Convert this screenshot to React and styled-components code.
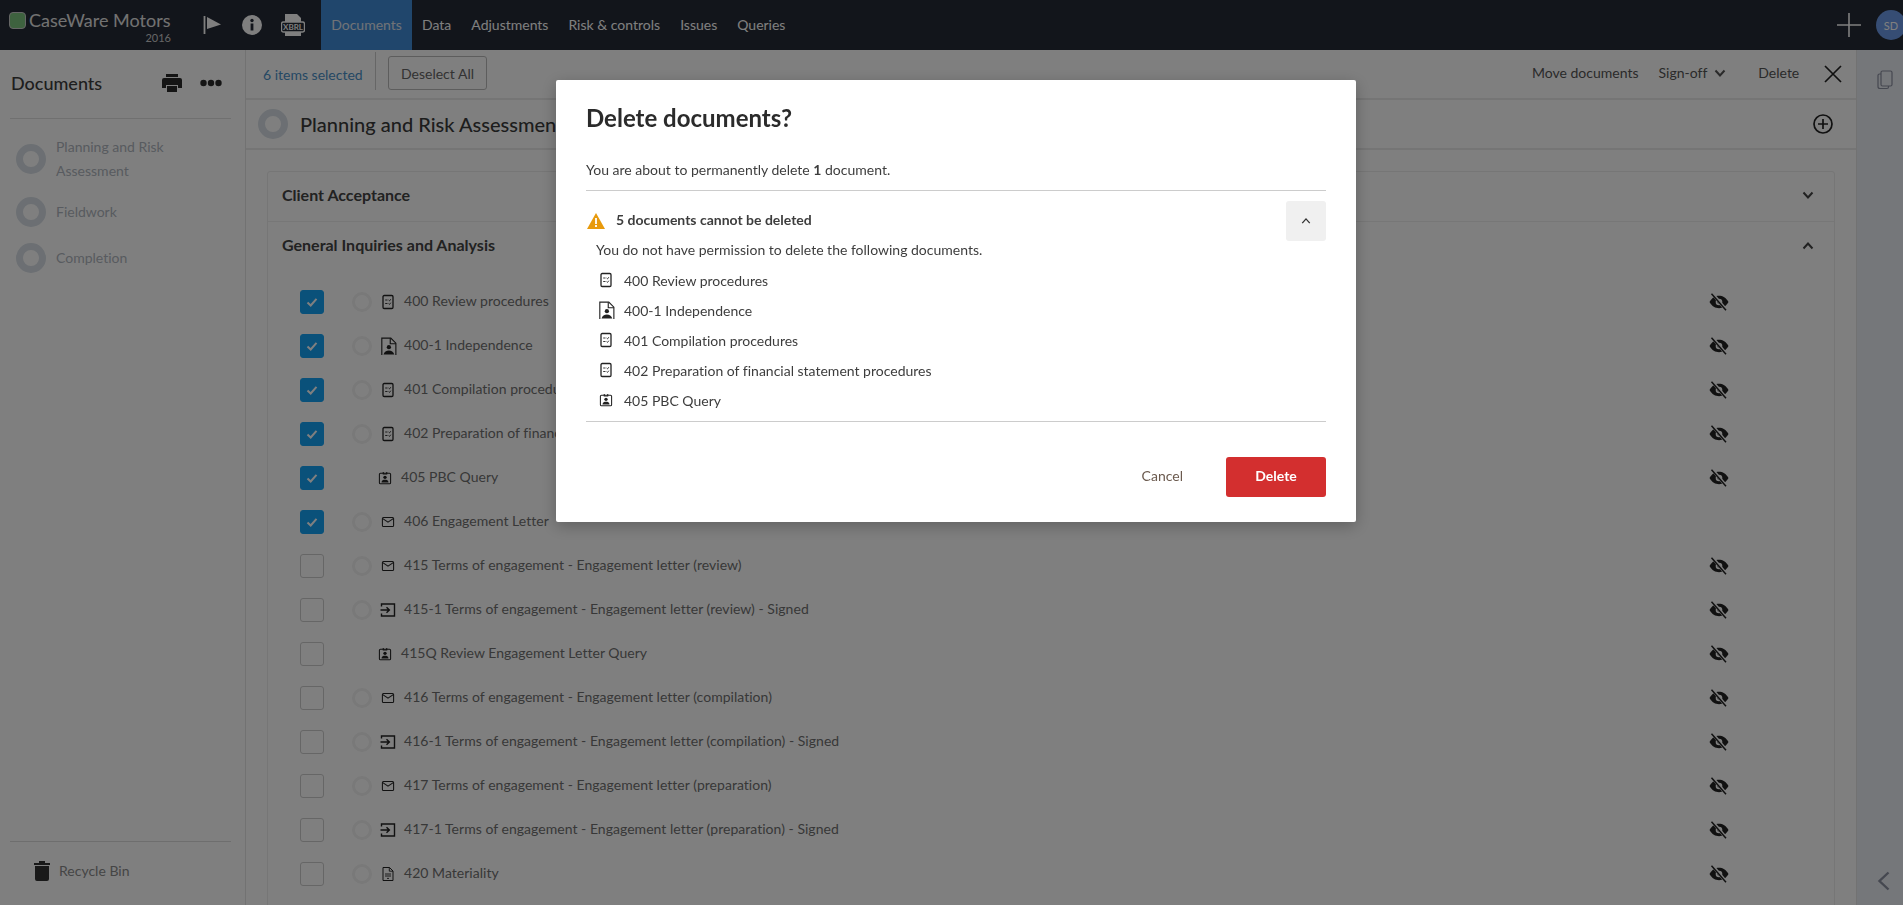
import React from 'react'
import styled, { createGlobalStyle } from 'styled-components'

const GlobalStyle = createGlobalStyle`
    html, body { margin: 0; padding: 0; height: 100%; overflow: hidden; }
    body { font-family: Lato, "Open Sans", sans-serif; font-size: 14px; color: #666; background: #fff; font-variant-ligatures: none; }
    * { box-sizing: border-box; }
`

const Page = styled.div`
    height: 905px;
    display: flex;
    flex-direction: column;
    overflow: hidden;
`

const TopBar = styled.header`
    flex: 0 0 50px;
    height: 50px;
    display: flex;
    align-items: stretch;
    background: #242a36;
`

const Logo = styled.div`
    flex: 0 0 162px;
    margin-left: 9px;
    display: flex;
    flex-direction: column;
    padding-top: 8px;
`

const LogoLine = styled.div`
    display: flex;
    align-items: center;
    gap: 3px;
    white-space: nowrap;
`

const LogoMark = styled.span`
    flex: 0 0 17px;
    height: 17px;
    border-radius: 4px;
    background: #7dc47f;
    border: 1px solid #ccc;
`

const LogoName = styled.span`
    font-size: 18px;
    line-height: 24px;
    color: #e4e4e4;
`

const LogoYear = styled.span`
    align-self: flex-end;
    font-size: 11px;
    line-height: 12px;
    color: #ccc;
`

const TopIcons = styled.div`
    flex: 0 0 118px;
    display: flex;
    align-items: center;
    margin-left: 32px;
    gap: 19px;
    color: #fff;
`

const NavLink = styled.a`
    display: flex;
    align-items: center;
    justify-content: center;
    flex: none;
    padding-bottom: 2px;
    margin-right: ${(p) => (p.$active ? '10px' : '20px')};
    width: ${(p) => (p.$active ? '91px' : 'auto')};
    background: ${(p) => (p.$active ? '#408cd8' : 'transparent')};
    color: ${(p) => (p.$active ? '#e0e6ee' : '#fff')};
    font-size: 14px;
`

const TopRight = styled.div`
    margin-left: auto;
    display: flex;
    align-items: center;
    gap: 14px;
    margin-right: -3px;
`

const Avatar = styled.span`
    width: 30px;
    height: 30px;
    border-radius: 50%;
    background: #6d9be8;
    color: #fff;
    font-size: 11px;
    display: flex;
    align-items: center;
    justify-content: center;
`

const Body = styled.div`
    flex: 1;
    min-height: 0;
    display: flex;
`

const Sidebar = styled.aside`
    flex: 0 0 246px;
    border-right: 1px solid #e4e4e4;
    padding: 0 14px 0 10px;
    display: flex;
    flex-direction: column;
`

const SideHead = styled.div`
    height: 69px;
    border-bottom: 1px solid #e0e0e0;
    display: flex;
    align-items: flex-start;
    padding-top: 21px;
`

const SideTitle = styled.h2`
    margin: 0;
    padding-left: 1px;
    font-size: 18px;
    line-height: 24px;
    font-weight: 500;
    color: #3c3c3c;
    flex: 1;
`

const SideTools = styled.div`
    display: flex;
    align-items: center;
    gap: 18px;
    color: #2a2a2a;
    margin-right: 9px;
    height: 24px;
`

const Stages = styled.div`
    flex: 1;
    padding: 16px 0 0 6px;
`

const Stage = styled.div`
    display: flex;
    align-items: center;
    gap: 10px;
    min-height: 46px;
    margin-bottom: ${(p) => (p.$gap || 0)}px;
    color: #b0b6c0;
    line-height: 24px;
`

const Ring = styled.span`
    flex: 0 0 30px;
    width: 30px;
    height: 30px;
    border-radius: 50%;
    border: 7px solid #d8dfe6;
`

const Recycle = styled.div`
    height: 64px;
    border-top: 1px solid #ddd;
    display: flex;
    align-items: center;
    gap: 9px;
    padding: 0 0 6px 24px;
    color: #8b8b8b;
`

const Main = styled.main`
    flex: 1;
    min-width: 0;
    display: flex;
    flex-direction: column;
`

const Toolbar = styled.div`
    flex: 0 0 50px;
    display: flex;
    align-items: center;
    padding: 0 16px 0 17px;
    border-bottom: 2px solid #eaeaea;
`

const Selected = styled.span`
    flex: none;
    color: #4a90c8;
    padding-right: 12px;
    height: 38px;
    line-height: 46px;
    border-right: 1px solid #ccc;
    margin-right: 12px;
    width: 113px;
    white-space: nowrap;
    margin-top: -6px;
`

const GhostButton = styled.button`
    flex: none;
    width: 99px;
    height: 34px;
    margin-top: -2px;
    border: 1px solid #bbb;
    border-radius: 3px;
    background: transparent;
    font: inherit;
    color: #666;
`

const ToolLink = styled.span`
    flex: none;
    display: flex;
    align-items: center;
    gap: 7px;
    white-space: nowrap;
    color: #555;
    margin-left: ${(p) => p.$left}px;
    margin-top: -3px;
`

const CloseMark = styled.span`
    flex: none;
    margin-left: 25px;
    display: flex;
`

const SectionHead = styled.div`
    flex: 0 0 50px;
    display: flex;
    align-items: center;
    gap: 12px;
    padding: 0 23px 0 12px;
    border-bottom: 2px solid #eaeaea;
`

const SectionTitle = styled.h1`
    margin: 0;
    flex: 1;
    font-size: 20px;
    font-weight: 500;
    color: #3a3a3a;
`

const Content = styled.div`
    flex: 1;
    min-height: 0;
    padding: 21px 21px 0;
    overflow: hidden;
`

const Card = styled.section`
    border: 1px solid #ececec;
    border-radius: 3px;
`

const CardHead = styled.div`
    height: 50px;
    display: flex;
    align-items: center;
    justify-content: space-between;
    padding: 0 20px 3px 14px;
    border-bottom: ${(p) => (p.$line ? '1px solid #eee' : 'none')};
    font-size: 16px;
    font-weight: 700;
    color: #444;
`

const CardTitle = styled.span`
    padding-bottom: 2px;
`

const RowList = styled.div`
    padding: 8px 0 44px;
`

const Row = styled.div`
    height: 44px;
    display: flex;
    align-items: center;
    padding-left: 32px;
    color: #707070;
`

const Check = styled.span`
    flex: 0 0 24px;
    height: 24px;
    border-radius: 3px;
    display: flex;
    align-items: center;
    justify-content: center;
    background: ${(p) => (p.$on ? '#14a2f4' : 'transparent')};
    border: 1px solid ${(p) => (p.$on ? '#14a2f4' : '#ccc')};
    color: #fff;
`

const StatusDot = styled.span`
    flex: 0 0 20px;
    height: 20px;
    margin-left: 28px;
    border-radius: 50%;
    border: 3px solid #f2f2f2;
`

const DocIcon = styled.span`
    display: flex;
    align-items: center;
    justify-content: center;
    flex: 0 0 ${(p) => (p.$query ? 12 : 16)}px;
    min-width: 0;
    margin-left: ${(p) => (p.$query ? 55 : 8)}px;
    margin-right: ${(p) => (p.$query ? 10 : 8)}px;
    color: #222;
`

const RowName = styled.span`
    white-space: nowrap;
    letter-spacing: 0.03px;
    padding-bottom: 3px;
`

const RowEye = styled.span`
    margin-left: auto;
    margin-right: 105px;
    display: flex;
    color: #222;
`

const SidePanel = styled.aside`
    flex: 0 0 47px;
    background: #ebeef5;
    border-left: 1px solid #e4e4e4;
    display: flex;
    flex-direction: column;
    align-items: flex-start;
    justify-content: space-between;
    padding: 20px 0 14px 20px;
    color: #8b90a0;
`

const Overlay = styled.div`
    position: fixed;
    inset: 0;
    background: rgba(0, 0, 0, 0.5);
`

const Modal = styled.div`
    position: absolute;
    left: 556px;
    top: 80px;
    width: 800px;
    height: 442px;
    padding: 0 30px 0 30px;
    background: #fff;
    border-radius: 2px;
    box-shadow: 0 4px 16px rgba(0, 0, 0, 0.25);
    display: flex;
    flex-direction: column;
    color: #3d3d3d;
`

const ModalTitle = styled.h2`
    margin: 22px 0 0;
    font-size: 24px;
    line-height: 32px;
    font-weight: 700;
    color: #2b2b2b;
`

const Lead = styled.p`
    margin: 26px 0 0;
    line-height: 20px;
    height: 31px;
    border-bottom: 1px solid #ccc;
`

const WarnHead = styled.div`
    display: flex;
    align-items: center;
    margin-top: 10px;
    height: 40px;
    font-weight: 700;
    gap: 11px;
    padding-left: 1px;
`

const WarnTitle = styled.span`
    padding-bottom: 3px;
`

const Collapse = styled.button`
    width: 40px;
    height: 40px;
    margin-left: auto;
    border: none;
    border-radius: 3px;
    background: #f0f0f0;
    display: flex;
    align-items: center;
    justify-content: center;
    color: #333;
`

const WarnText = styled.div`
    padding-left: 10px;
    line-height: 20px;
    height: 25px;
    margin-top: -1px;
`

const BlockedList = styled.div`
    border-bottom: 1px solid #ccc;
    height: 157px;
`

const BlockedItem = styled.div`
    height: 30px;
    display: flex;
    align-items: center;
    gap: 10px;
    padding-left: 12px;
`

const BlockedIcon = styled.span`
    flex: 0 0 16px;
    min-width: 0;
    display: flex;
    justify-content: center;
    color: #222;
`

const Actions = styled.div`
    display: flex;
    justify-content: flex-end;
    align-items: center;
    margin-top: 35px;
    gap: 37px;
`

const CancelBtn = styled.button`
    border: none;
    background: none;
    font: inherit;
    color: #6b5a4e;
    padding-bottom: 4px;
`

const DeleteBtn = styled.button`
    width: 100px;
    height: 40px;
    border: none;
    border-radius: 3px;
    background: #d32f2f;
    color: #fff;
    font: inherit;
    font-weight: 700;
    padding-bottom: 5px;
`

// icons drawn by hand, they are product glyphs
const Svg = ({ s = 16, w, h, vb = '0 0 16 16', children }) => (
    <svg width={w || s} height={h || s} viewBox={vb} fill="none" stroke="currentColor" strokeWidth="1.2" style={{ display: 'block', flex: 'none' }}>
        {children}
    </svg>
)

const ChecklistIcon = () => (
    <Svg s={16}>
        <rect x="3" y="1.500" width="10" height="13" rx="1.200" strokeWidth="1.300" />
        <path d="M5.200 6h2.300M5.200 9.500h2.300M8.600 6l.9.900 1.300-1.700M8.600 9.500l.9.900 1.300-1.700" strokeWidth="0.900" />
    </Svg>
)

const PersonDocIcon = () => (
    <Svg s={18}>
        <path d="M2.500 1h8L15 5.500V17H2.500z" strokeWidth="1" />
        <path d="M10 1v5h5" strokeWidth="1" />
        <circle cx="8.800" cy="9" r="1.900" fill="currentColor" stroke="none" />
        <path d="M4 15.500c.6-2.600 2.600-3.600 4.800-3.600s4 1 4.800 3.600z" fill="currentColor" stroke="none" />
    </Svg>
)

const QueryIcon = () => (
    <Svg s={14}>
        <rect x="1.600" y="2.600" width="12.800" height="12" rx="1.200" />
        <path d="M6 1v2.400h4V1" />
        <circle cx="8" cy="7.200" r="1.900" fill="currentColor" stroke="none" />
        <path d="M4 13c.2-2.400 2-3 4-3s3.800.6 4 3z" fill="currentColor" stroke="none" />
    </Svg>
)

const MailIcon = () => (
    <Svg s={14}>
        <rect x="1.600" y="2.800" width="12.800" height="10.400" rx="1.200" />
        <path d="M2 4.200l6 4 6-4" />
    </Svg>
)

const SignedIcon = () => (
    <Svg s={16}>
        <path d="M1.500 4.500V2h13v12h-13v-2.500" strokeWidth="1.400" />
        <path d="M0.500 8h8.500M6.500 5.200 9.400 8l-2.900 2.800" strokeWidth="1.400" />
    </Svg>
)

const PaperIcon = () => (
    <Svg s={16}>
        <path d="M3 1.500h6.500L13 5v9.500H3z" strokeWidth="1" />
        <path d="M9.300 1.500v3.700H13M5 8h6M5 10h6M7 12.400h2" strokeWidth="0.900" />
    </Svg>
)

const EyeOff = () => (
    <Svg w={20} h={18} vb="0 0 20 18">
        <path d="M0.500 9C3 4.600 6.400 2.800 10 2.800s7 1.800 9.500 6.200c-2.500 4.400-5.900 6.200-9.500 6.200S3 13.400.5 9z" fill="currentColor" stroke="none" />
        <circle cx="10" cy="9" r="3.300" fill="#fff" stroke="none" />
        <circle cx="10" cy="9" r="1.600" fill="currentColor" stroke="none" />
        <path d="M3.500.8l13.500 16" stroke="#fff" strokeWidth="3.200" />
        <path d="M2.500.8l14.500 16.400" strokeWidth="1.500" />
    </Svg>
)

const Chevron = ({ up, s = 12, sw = 2 }) => (
    <Svg s={s} vb="0 0 12 12">
        <path d={up ? 'M1.500 8.500 6 3.500l4.500 5' : 'M1.500 3.500 6 8.500l4.500-5'} strokeWidth={sw} />
    </Svg>
)

const TickIcon = () => (
    <Svg s={14} vb="0 0 14 14">
        <path d="M2.500 7.500 5.700 10.500 11.500 3.800" strokeWidth="2" />
    </Svg>
)

const kinds = {
    list: <ChecklistIcon />,
    person: <PersonDocIcon />,
    query: <QueryIcon />,
    mail: <MailIcon />,
    signed: <SignedIcon />,
    paper: <PaperIcon />,
}

const rows = [
    { name: '400 Review procedures', kind: 'list', on: true },
    { name: '400-1 Independence', kind: 'person', on: true },
    { name: '401 Compilation procedures', kind: 'list', on: true },
    { name: '402 Preparation of financial statement procedures', kind: 'list', on: true },
    { name: '405 PBC Query', kind: 'query', on: true },
    { name: '406 Engagement Letter', kind: 'mail', on: true, noEye: true },
    { name: '415 Terms of engagement - Engagement letter (review)', kind: 'mail' },
    { name: '415-1 Terms of engagement - Engagement letter (review) - Signed', kind: 'signed' },
    { name: '415Q Review Engagement Letter Query', kind: 'query' },
    { name: '416 Terms of engagement - Engagement letter (compilation)', kind: 'mail' },
    { name: '416-1 Terms of engagement - Engagement letter (compilation) - Signed', kind: 'signed' },
    { name: '417 Terms of engagement - Engagement letter (preparation)', kind: 'mail' },
    { name: '417-1 Terms of engagement - Engagement letter (preparation) - Signed', kind: 'signed' },
    { name: '420 Materiality', kind: 'paper' },
]

const blocked = rows.slice(0, 5)

function DocRow ({ row }) {
    const isQuery = row.kind === 'query'
    return (
        <Row>
            <Check $on={row.on}>{row.on && <TickIcon />}</Check>
            {!isQuery && <StatusDot />}
            <DocIcon $query={isQuery}>{kinds[row.kind]}</DocIcon>
            <RowName>{row.name}</RowName>
            {!row.noEye && <RowEye><EyeOff /></RowEye>}
        </Row>
    )
}

export default function App () {
    return (
        <Page>
            <GlobalStyle />
            <TopBar>
                <Logo>
                    <LogoLine>
                        <LogoMark />
                        <LogoName>CaseWare Motors</LogoName>
                    </LogoLine>
                    <LogoYear>2016</LogoYear>
                </Logo>
                <TopIcons>
                    <Svg s={20} vb="0 0 20 20">
                        <path d="M1.500 1v18" strokeWidth="1.800" />
                        <path d="M4 2l14 7.500L4 14z" fill="currentColor" stroke="none" />
                    </Svg>
                    <svg width="20" height="20" viewBox="0 0 20 20" style={{ display: 'block', flex: 'none' }}>
                        <circle cx="10" cy="10" r="10" fill="currentColor" />
                        <rect x="8.600" y="8.500" width="2.800" height="7" fill="#242a36" />
                        <circle cx="10" cy="5.500" r="1.700" fill="#242a36" />
                    </svg>
                    <svg width="24" height="24" viewBox="0 0 24 24" style={{ display: 'block', flex: 'none' }}>
                        <path d="M4 1h12l4 4v5H4zM4 19h16v4H4z" fill="currentColor" />
                        <rect x="0.500" y="9" width="23" height="10" rx="2" fill="#242a36" stroke="currentColor" strokeWidth="1.400" />
                        <text x="12" y="17" textAnchor="middle" fontSize="8" fontWeight="700" fontFamily="Lato" fill="currentColor">XBRL</text>
                    </svg>
                </TopIcons>
                <NavLink $active>Documents</NavLink>
                <NavLink>Data</NavLink>
                <NavLink>Adjustments</NavLink>
                <NavLink>Risk &amp; controls</NavLink>
                <NavLink>Issues</NavLink>
                <NavLink>Queries</NavLink>
                <TopRight>
                    <Svg s={26} vb="0 0 26 26">
                        <path d="M13 1v24M1 13h24" stroke="#fff" strokeWidth="1.600" />
                    </Svg>
                    <Avatar>SD</Avatar>
                </TopRight>
            </TopBar>
            <Body>
                <Sidebar>
                    <SideHead>
                        <SideTitle>Documents</SideTitle>
                        <SideTools>
                            <svg width="20" height="18" viewBox="0 0 20 18" style={{ display: 'block' }}>
                                <path d="M4 0h12v3H4zM2 4h16a2 2 0 0 1 2 2v8h-4v-3H4v3H0V6a2 2 0 0 1 2-2zM5 12h10v6H5z" fill="currentColor" />
                            </svg>
                            <svg width="22" height="8" viewBox="0 0 22 8" style={{ display: 'block' }}>
                                <circle cx="3.500" cy="4" r="3.200" fill="currentColor" />
                                <circle cx="11" cy="4" r="3.200" fill="currentColor" />
                                <circle cx="18.500" cy="4" r="3.200" fill="currentColor" />
                            </svg>
                        </SideTools>
                    </SideHead>
                    <Stages>
                        <Stage $gap={6}><Ring /><span>Planning and Risk<br />Assessment</span></Stage>
                        <Stage><Ring /><span>Fieldwork</span></Stage>
                        <Stage><Ring /><span>Completion</span></Stage>
                    </Stages>
                    <Recycle>
                        <svg width="16" height="20" viewBox="0 0 16 20" style={{ display: 'block', color: '#333' }}>
                            <path d="M0 2h5V0h6v2h5v2H0zM1 5h14v13a2 2 0 0 1-2 2H3a2 2 0 0 1-2-2z" fill="currentColor" />
                        </svg>
                        <span>Recycle Bin</span>
                    </Recycle>
                </Sidebar>
                <Main>
                    <Toolbar>
                        <Selected>6 items selected</Selected>
                        <GhostButton>Deselect All</GhostButton>
                        <ToolLink $left={1045}>Move documents</ToolLink>
                        <ToolLink $left={20}>Sign-off <Chevron /></ToolLink>
                        <ToolLink $left={32}>Delete</ToolLink>
                        <CloseMark>
                            <Svg s={18} vb="0 0 18 18">
                                <path d="M1 1l16 16M17 1 1 17" stroke="#222" strokeWidth="1.700" />
                            </Svg>
                        </CloseMark>
                    </Toolbar>
                    <SectionHead>
                        <Ring />
                        <SectionTitle>Planning and Risk Assessment</SectionTitle>
                        <Svg s={20} vb="0 0 20 20">
                            <circle cx="10" cy="10" r="9" stroke="#222" strokeWidth="1.700" />
                            <path d="M10 5v10M5 10h10" stroke="#222" strokeWidth="1.700" />
                        </Svg>
                    </SectionHead>
                    <Content>
                        <Card>
                            <CardHead $line><CardTitle>Client Acceptance</CardTitle> <Chevron /></CardHead>
                            <CardHead><CardTitle>General Inquiries and Analysis</CardTitle> <Chevron up /></CardHead>
                            <RowList>
                                {rows.map((row) => <DocRow key={row.name} row={row} />)}
                            </RowList>
                        </Card>
                    </Content>
                </Main>
                <SidePanel>
                    <Svg w={16} h={20} vb="0 0 16 20">
                        <rect x="4" y="1" width="11" height="15" rx="1.500" />
                        <path d="M4 4H2.500A1.500 1.500 0 0 0 1 5.500v11A2 2 0 0 0 3 18.500h7A1.500 1.500 0 0 0 11.500 17v-1" />
                    </Svg>
                    <Svg w={14} h={20} vb="0 0 14 20">
                        <path d="M11.500 1.500 2.500 10l9 8.500" strokeWidth="2.400" />
                    </Svg>
                </SidePanel>
            </Body>
            <Overlay>
                <Modal>
                    <ModalTitle>Delete documents?</ModalTitle>
                    <Lead>You are about to permanently delete <b>1</b> document.</Lead>
                    <WarnHead>
                        <svg width="18" height="16" viewBox="0 0 18 16" style={{ display: 'block' }}>
                            <path d="M9 0l9 16H0z" fill="#e89a0c" />
                            <rect x="8.100" y="5" width="1.800" height="6" fill="#fff" />
                            <rect x="8.100" y="12" width="1.800" height="2" fill="#fff" />
                        </svg>
                        <WarnTitle>5 documents cannot be deleted</WarnTitle>
                        <Collapse><Chevron up s={10} sw={1.600} /></Collapse>
                    </WarnHead>
                    <WarnText>You do not have permission to delete the following documents.</WarnText>
                    <BlockedList>
                        {blocked.map((row) => (
                            <BlockedItem key={row.name}>
                                <BlockedIcon>{kinds[row.kind]}</BlockedIcon>
                                <span>{row.name}</span>
                            </BlockedItem>
                        ))}
                    </BlockedList>
                    <Actions>
                        <CancelBtn>Cancel</CancelBtn>
                        <DeleteBtn>Delete</DeleteBtn>
                    </Actions>
                </Modal>
            </Overlay>
        </Page>
    )
}
